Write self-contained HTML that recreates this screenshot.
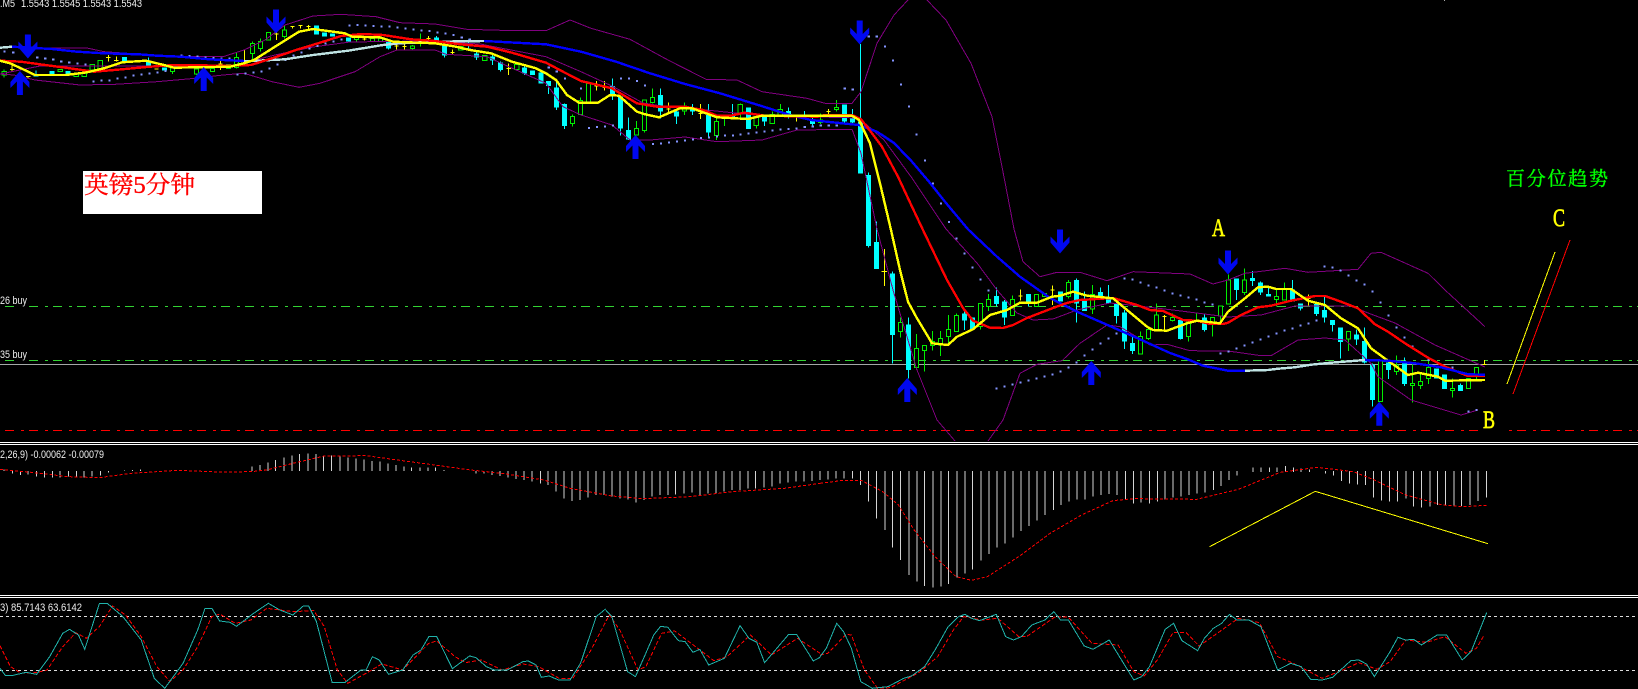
<!DOCTYPE html>
<html>
<head>
<meta charset="utf-8">
<style>
html,body{margin:0;padding:0;background:#000;overflow:hidden}
svg{display:block;position:absolute;left:0;top:0}
svg *{vector-effect:non-scaling-stroke}
.c{shape-rendering:crispEdges}
text{font-family:"Liberation Sans",sans-serif}
</style>
</head>
<body>
<svg width="1638" height="689" viewBox="0 0 1638 689" fill="none" stroke-linejoin="miter">
<rect x="0" y="0" width="1638" height="689" fill="#000"/>

<!-- horizontal levels -->
<g class="c">
<path d="M5 306.5H1638M5 360.5H1638" stroke="#32d232" stroke-dasharray="9 7 3 5"/>
<path d="M5 430.5H1638" stroke="#f00" stroke-dasharray="9 7 3 5"/>
<rect x="14" y="300" width="15" height="7" fill="#000"/>
<rect x="14" y="354" width="15" height="7" fill="#000"/>
<rect x="1478" y="428" width="30" height="4" fill="#000"/>
<path d="M0 364.5H1638" stroke="#a4a8a8"/>
<path d="M0 442.5H1638M0 444.5H1638M0 595.5H1638M0 597.5H1638" stroke="#fff"/>
<path d="M0 616.5H1638M0 670.5H1638" stroke="#ddd" stroke-dasharray="3 3"/>
</g>

<!-- candles: left -->
<g class="c" transform="translate(0,0) scale(.3482,.3333)">
<path stroke="#0ff" d="M104 212V230M426 172V200M1116 120V148M1254 108V130M1277 135V172M1346 118V152M1369 150V180M1415 160V195M1438 185V215M1507 200V225M1553 215V250"/>
<path stroke="#0ff" stroke-width="5" d="M104 225V230M150 213V225M196 213V225M357 171V185M426 186V197M472 203V212M909 76V104M932 97V110M955 101V110M1001 112V125M1116 125V146M1254 112V125M1277 137V167M1346 145V152M1369 160V172M1415 170V182M1438 187V210M1507 203V220M1530 212V225M1553 218V250"/>
<path stroke="#0e0" d="M12 208V232M495 200V222M564 205V225M679 158V205M725 125V180M748 115V155M817 75V115M1024 105V125M1070 110V125M1185 135V150M1208 100V140"/>
<path stroke="#0e0" fill="#000" d="M6 215h12V225h-12zM167 208h12V215h-12zM213 220h12V230h-12zM236 220h12V230h-12zM259 193h12V210h-12zM282 181h12V205h-12zM489 204h12V215h-12zM558 207h12V222h-12zM604 205h12V215h-12zM650 193h12V205h-12zM673 172h12V203h-12zM719 130h12V160h-12zM742 124h12V145h-12zM765 97h12V120h-12zM811 90h12V110h-12zM1018 110h12V118h-12zM1064 115h12V125h-12zM1087 115h12V125h-12zM1179 138h12V146h-12zM1202 122h12V130h-12zM1317 140h12V150h-12zM1386 167h12V182h-12zM1478 193h12V208h-12z"/>
<path stroke="#ff0" d="M35 190V215M29 208h12M81 228V235M75 230h12M311 165V185M305 173h12M334 170V185M328 182h12M397 183h12M443 207h12M633 182V210M627 192h12M702 150V195M696 190h12M794 85V120M788 102h12M840 80V85M834 80h12M863 76V85M857 76h12M886 75V90M880 80h12M972 100h12M1047 110V122M1041 117h12M1139 125V148M1133 138h12M1162 125V148M1156 140h12M1231 108V128M1225 115h12M1300 148V165M1294 157h12M1461 190V225M1455 205h12"/>
</g>

<!-- candles: mid -->
<g class="c" transform="translate(546,0) scale(.3482,.3333)">
<path stroke="#0ff" d="M7 243V282M30 243V330M53 310V387M191 235V300M214 290V407M237 353V420M329 265V355M375 330V372M421 312V345M467 312V410M536 312V355M627 343V378M696 322V355M742 333V358M765 348V382M857 313V368M880 327V375M903 132V520M926 517V690M949 665V690"/>
<path stroke="#0ff" stroke-width="5" d="M7 243V258M30 263V323M53 312V378M191 258V290M214 290V385M237 390V418M329 285V335M375 335V350M421 325V335M467 345V398M536 343V352M581 322V387M627 343V365M696 333V345M742 345V350M765 358V372M857 313V365M880 353V367M903 365V520M926 525V690"/>
<path stroke="#0e0" d="M76 343V380M99 292V345M260 363V405M283 300V398M306 265V310M398 307V345M490 350V420M513 343V378M558 310V352M604 345V385M650 335V372M673 312V350M788 340V372M834 300V335"/>
<path stroke="#0e0" fill="#000" d="M70 350h12V371h-12zM93 301h12V344h-12zM116 250h12V308h-12zM254 385h12V405h-12zM277 300h12V392h-12zM300 292h12V308h-12zM392 318h12V333h-12zM484 364h12V407h-12zM507 348h12V355h-12zM552 313h12V342h-12zM598 350h12V377h-12zM644 343h12V370h-12zM667 328h12V345h-12zM782 360h12V367h-12zM828 322h12V328h-12z"/>
<path stroke="#ff0" d="M145 243V272M139 258h12M168 243V272M162 262h12M352 308V340M346 327h12M444 312V357M438 340h12M719 345V365M713 348h12M811 327V348M805 335h12"/>
</g>

<!-- candles: after drop -->
<g class="c" transform="translate(820,230) scale(.3333)">
<path stroke="#0ff" d="M145 0V52M169 0V117M217 125V400M265 262V445M433 240V300M457 262V300M529 172V230M553 210V285M625 192V230M721 185V215M769 145V278M793 185V243M841 172V210M865 165V220M889 215V280M913 240V357M937 320V372M1081 262V328M1153 250V305"/>
<path stroke="#0ff" stroke-width="5" d="M145 0V48M169 36V117M217 130V315M265 283V420M433 250V272M457 262V297M529 198V222M553 214V263M625 192V218M721 185V215M769 150V220M793 213V243M841 186V203M865 205V220M889 222V258M913 248V335M937 339V363M1081 270V327M1153 262V300"/>
<path stroke="#0e0" d="M241 262V322M289 312V420M313 345V425M337 303V362M361 303V378M385 255V340M409 250V305M481 220V298M505 192V243M577 197V258M649 193V230M745 150V205M817 165V252M961 305V372M985 292V330M1009 220V300M1057 250V275M1105 270V335M1129 250V275M1177 262V320M1201 228V285M1225 133V222"/>
<path stroke="#0e0" fill="#000" d="M235 277h12V305h-12zM283 355h12V413h-12zM307 347h12V362h-12zM331 335h12V347h-12zM355 325h12V345h-12zM379 299h12V320h-12zM403 256h12V305h-12zM475 220h12V290h-12zM499 208h12V230h-12zM571 208h12V257h-12zM643 193h12V230h-12zM667 190h12V200h-12zM739 157h12V200h-12zM811 193h12V237h-12zM955 320h12V372h-12zM979 298h12V325h-12zM1003 255h12V300h-12zM1051 262h12V272h-12zM1099 276h12V320h-12zM1171 262h12V280h-12zM1195 228h12V258h-12zM1219 150h12V222h-12z"/>
<path stroke="#ff0" d="M193 57V168M185 124h16M601 178V212M595 198h12M697 167V225M691 180h12M1033 255V300M1027 260h12"/>
</g>

<!-- candles: right -->
<g class="c" transform="translate(1228,230) scale(.3333)">
<path stroke="#0ff" d="M25 145V210M73 123V168M97 155V195M121 170V200M193 150V215M217 220V242M265 222V258M289 195V278M313 270V305M337 292V385M385 298V345M409 292V400M433 400V530M481 397V447M529 382V468M697 460V483"/>
<path stroke="#0ff" stroke-width="5" d="M25 145V180M73 144V153M97 157V188M121 192V200M193 178V215M217 220V236M265 222V252M289 240V263M313 270V285M337 292V336M385 313V328M409 333V398M433 403V510M481 397V420M529 400V462M625 416V445M649 433V477M697 465V483"/>
<path stroke="#0e0" d="M49 115V195M145 180V230M169 157V212M361 305V363M505 377V435M553 400V518M577 430V477M601 390V462M673 445V503M745 412V450"/>
<path stroke="#0e0" fill="#000" d="M43 150h12V188h-12zM139 199h12V208h-12zM163 177h12V210h-12zM355 305h12V327h-12zM451 393h12V515h-12zM499 405h12V425h-12zM547 460h12V467h-12zM571 455h12V467h-12zM595 412h12V445h-12zM667 475h12V482h-12zM715 445h12V476h-12zM739 412h12V432h-12z"/>
<path stroke="#ff0" d="M241 193V228M235 205h12M235 228h12M769 390V404M763 403h12"/>
</g>

<!-- Bollinger -->
<g class="c" stroke="#800080">
<polyline points="38,48 87,48 104,51.7 153,55 181,56.7 223,56.7 244,50 265,40 285,25 313,16 341,14.3 376,16.7 400,22.7 435,24 467,29.3 515,30.7 546,30.7 570,20 591,28.3 630,39.3 668,60 706,79.3 737,80 762,91.7 807,98.3 825,103.3 852,103.3 861,91.7 877,43.3 894,15 908,0"/>
<polyline points="927,0 946,20 971,63.3 992,116.7 1002,166.7 1014,229 1023,261.7 1040,276.7 1057,272.3 1080,272.3 1107,280.7 1133,271.7 1190,274 1213,284 1228,280 1245,273.3 1285,268.3 1308,272.3 1358,269.3 1371,253.3 1381,252.3 1428,273.3 1445,290 1485,326.7"/>
<polyline points="0,74 40,66 120,66 230,66 275,55 313,47 350,42 420,41 480,44 546,56.7 581,71.7 612,86 643,103 668,107 706,110 755,115 807,116.7 859,118 884,140 911,176.7 946,229 977,263 997,290 1017,313 1033,320 1053,319 1077,310 1110,303 1130,305 1173,310 1228,317 1261,315 1295,306 1351,306 1368,313 1395,323 1435,345 1485,367"/>
<polyline points="0,74 14,75 35,80 80,85 115,84.3 157,81.7 195,78.3 223,75 244,73.3 272,81.7 299,87.3 320,83.3 355,71.7 380,56.7 397,50 435,50 446,54.3 487,56.7 505,65 546,83.3 563,106.7 581,115 612,125 630,140 650,140 685,137 717,141.7 762,140 797,130 852,129.3 861,153.3 877,229 893,290 917,370 937,420 955,441"/>
<polyline points="988,441 1003,420 1020,373.3 1037,364.3 1062,360.7 1080,343.3 1107,325 1120,326.7 1150,345 1167,344.3 1190,350.7 1228,351 1261,355.7 1271,355.7 1298,340 1325,338 1345,340 1371,363.3 1378,376.7 1411,400 1461,415 1478,410"/>
</g>

<!-- SAR dots -->
<g class="c" stroke="#8494ff" stroke-width="2">
<path transform="scale(.3482,.3333)" d="M10 155h6M35 157h6M104 172h6M127 175h6M150 178h6M173 184h6M196 187h6M219 190h6M242 194h6M265 244h6M288 241h6M311 241h6M334 235h6M357 232h6M380 226h6M403 223h6M426 220h6M449 217h6M472 213h6M518 166h6M541 168h6M564 170h6M587 172h6M610 174h6M633 176h6M656 176h6M679 223h6M702 220h6M725 217h6M748 214h6M771 205h6M794 193h6M817 180h6M840 166h6M863 157h6M886 145h6M909 138h6M932 130h6M955 125h6M978 118h6M1001 76h6M1024 75h6M1047 76h6M1070 78h6M1093 79h6M1116 80h6M1139 82h6M1162 85h6M1185 89h6M1208 91h6M1231 93h6M1254 97h6M1277 100h6M1300 105h6M1323 112h6M1346 118h6"/>
<path transform="translate(546,0) scale(.3482,.3333)" d="M5 203h6M28 214h6M51 235h6M97 265h6M120 384h6M143 381h6M166 379h6M189 376h6M212 236h6M235 236h6M258 243h6M281 256h6M304 432h6M327 430h6M350 427h6M373 424h6M396 421h6M419 418h6M442 414h6M465 412h6M488 409h6M511 406h6M534 406h6M556 403h6M579 400h6M602 397h6M625 394h6M648 391h6M671 388h6M694 387h6M717 385h6M740 381h6M763 379h6M786 376h6M809 376h6M832 376h6M855 265h6M878 268h6M924 110h6M947 109h6M970 139h6M993 181h6M1016 254h6M1039 319h6M1061 403h6M1085 481h6M1108 550h6M1131 610h6M1154 666h6"/>
<path transform="translate(820,230) scale(.3333)" d="M407 25h6M431 70h6M455 112h6M479 148h6M503 181h6M527 475h6M551 469h6M575 463h6M599 457h6M623 451h6M647 445h6M671 439h6M695 433h6M719 424h6M743 412h6M767 397h6M791 376h6M815 358h6M839 340h6M863 325h6M887 310h6M911 145h6M935 148h6M959 157h6M983 166h6M1007 172h6M1031 181h6M1055 190h6M1079 196h6M1103 202h6M1127 208h6M1151 217h6M1175 223h6M1199 370h6M1223 365h6"/>
<path transform="translate(1228,230) scale(.3333)" d="M23 355h6M47 346h6M71 337h6M95 328h6M119 319h6M143 310h6M167 301h6M191 295h6M215 286h6M239 280h6M263 271h6M287 109h6M311 112h6M335 121h6M359 136h6M383 151h6M407 163h6M431 184h6M455 217h6M479 256h6M503 292h6M527 322h6M551 349h6M599 390h6M671 412h6M719 544h6M743 540h6"/>
</g>

<!-- Moving averages -->
<g class="c" stroke-width="2.4">
<polyline stroke="#bfe3e3" points="0,47.7 12,46.7"/>
<polyline stroke="#0000ff" points="12,46.7 52,49 77,51.7 104,53.3 139,54.3 157,55.7 181,56.7 209,59.3 244,61"/>
<polyline stroke="#bfe3e3" points="244,61 251,61 285,59.3 313,55 348,50.7 383,45 400,43.3 435,41.7 484,41"/>
<polyline stroke="#0000ff" points="484,41 546,44.3 581,51.7 616,61.7 650,73.3 685,84 720,93.3 755,104 790,115 811,120 842,123.3 859,125 877,131.7 894,143 912,161.7 929,181.7 946,203 968,229.3 997,256.7 1020,276.7 1050,298 1077,311.7 1103,323 1137,338 1170,353 1187,359 1203,365.7 1228,370.7 1245,370.7"/>
<polyline stroke="#bfe3e3" points="1245,370.7 1268,370 1278,368.7 1295,367.3 1311,364.7 1331,362.7 1365,360"/>
<polyline stroke="#f00" points="0,60.7 21,61.7 45,65 70,68.3 94,71.7 122,69.3 150,66.7 174,65 226,65.7 251,65 275,57.3 296,50 320,42.7 341,36 362,34 383,35 411,39.3 435,41 460,44.3 487,46.7 512,52.7 546,62.7 563,71.7 581,81 612,88.3 623,95 637,103.3 657,106.7 685,106.7 703,110 717,115.7 731,115.7 744,112.7 765,115.7 818,116.7 825,115 852,115 861,119.3 870,130.7 882,146.7 898,176.7 912,206.7 923,230 947,280 963,308 973,320.7 990,327.7 1003,328 1013,325 1027,318 1053,308 1067,303 1080,300 1113,298 1137,305 1150,310 1163,311 1183,320 1197,320.7 1210,324 1223,324 1228,322.7 1241,315 1258,307.3 1271,305.7 1291,300.7 1315,296 1325,296 1341,301.7 1358,308.3 1375,324.3 1388,331.7 1405,343.3 1428,357.7 1445,366.7 1468,376 1485,376"/>
<polyline stroke="#ff0" points="0,60.7 10,63.3 21,68.3 35,75 66,75 87,72.3 104,68.3 122,62.3 146,60.7 164,65 174,67.7 230,66.7 244,63.3 254,60 275,46.7 299,31.7 313,29 345,33.3 352,36.7 380,37.3 393,41.7 435,43.3 456,46.7 470,50 491,53.3 512,61.7 536,68.3 546,73.3 556,80 567,95 579,102.7 598,102.7 610,95 619,95.7 637,111.7 645,114.3 659,117.3 680,108.3 692,108.3 717,117.3 748,119 762,115.7 825,115.7 852,115.7 859,120 870,143.3 880,183.3 891,230 900,270 908,301.7 917,318.3 932,343.3 948,345 957,336.7 973,329.3 990,315 1007,310 1020,302.7 1037,302.7 1052,296.7 1060,295.7 1073,291.7 1087,295.7 1113,298.3 1127,310 1147,326.7 1153,330 1167,330.7 1187,323.3 1197,320.7 1220,323.3 1228,311.7 1245,298.3 1258,287.3 1268,286.7 1276,289 1291,289 1308,300.7 1325,305 1341,318.3 1358,328.3 1371,348.3 1386,359.3 1408,375 1418,372.7 1438,376.7 1445,380.7 1485,380"/>
<polyline stroke="#0000ff" points="1365,360 1388,360.7 1415,363.3 1441,367.3 1468,374.3 1485,374.7"/>
</g>

<!-- trend lines -->
<g class="c">
<path stroke="#ff0" d="M1507 384L1555 252"/>
<path stroke="#f00" d="M1513 394L1570 240"/>
</g>

<!-- arrows -->
<g fill="#0008f0">
<path d="M0 0L9.5 11V17L3 10.5V24H-3V10.5L-9.5 17V11Z" transform="translate(19.9,71)"/>
<path d="M0 0L9.5 11V17L3 10.5V24H-3V10.5L-9.5 17V11Z" transform="translate(203.7,67)"/>
<path d="M0 0L9.5 11V17L3 10.5V24H-3V10.5L-9.5 17V11Z" transform="translate(635.5,135)"/>
<path d="M0 0L9.5 11V17L3 10.5V24H-3V10.5L-9.5 17V11Z" transform="translate(907.3,378)"/>
<path d="M0 0L9.5 11V17L3 10.5V24H-3V10.5L-9.5 17V11Z" transform="translate(1091.3,361)"/>
<path d="M0 0L9.5 11V17L3 10.5V24H-3V10.5L-9.5 17V11Z" transform="translate(1379.3,401.7)"/>
<path d="M0 0L-9.5 -11V-17L-3 -10.5V-24H3V-10.5L9.5 -17V-11Z" transform="translate(27.9,58.5)"/>
<path d="M0 0L-9.5 -11V-17L-3 -10.5V-24H3V-10.5L9.5 -17V-11Z" transform="translate(276,33.5)"/>
<path d="M0 0L-9.5 -11V-17L-3 -10.5V-24H3V-10.5L9.5 -17V-11Z" transform="translate(859.7,44.5)"/>
<path d="M0 0L-9.5 -11V-17L-3 -10.5V-24H3V-10.5L9.5 -17V-11Z" transform="translate(1060,253.5)"/>
<path d="M0 0L-9.5 -11V-17L-3 -10.5V-24H3V-10.5L9.5 -17V-11Z" transform="translate(1228,274.5)"/>
</g>

<!-- MACD histogram -->
<g class="c" stroke="#d4d4d4">
<path transform="translate(0,440) scale(.523,.3333)" d="M8 93V88M24 93V100M39 93V105M54 93V103M70 93V110M85 93V113M100 93V113M115 93V112M131 93V110M146 93V110M161 93V112M176 93V110M192 93V107M207 93V98M238 93V91M253 93V90M269 93V89M482 93V80M497 93V75M512 93V67M527 93V60M543 93V52M558 93V47M573 93V42M589 93V40M604 93V42M619 93V47M634 93V47M650 93V48M665 93V52M681 93V55M696 93V58M711 93V63M727 93V65M742 93V70M757 93V75M772 93V80M787 93V82M803 93V82M818 93V82M833 93V82M849 93V90M910 93V100M925 93V100M941 93V105M956 93V108M971 93V113M987 93V117M1002 93V120M1017 93V125M1033 93V130M1048 93V135M1063 93V155M1078 93V175M1094 93V183M1109 93V180M1124 93V172M1140 93V165M1155 93V165M1170 93V170M1185 93V175M1201 93V178M1216 93V188M1231 93V180M1247 93V170M1262 93V165M1277 93V165M1292 93V163M1308 93V160M1323 93V158M1338 93V165M1354 93V160M1369 93V160M1384 93V155M1400 93V150M1415 93V150M1430 93V145M1445 93V145M1461 93V142M1476 93V140M1491 93V130M1507 93V128M1522 93V125M1537 93V125M1553 93V123"/>
<path transform="translate(820,440) scale(.523,.3333)" d="M0 93V120M15 93V118M31 93V115M46 93V115M62 93V115M77 93V135M93 93V185M108 93V235M124 93V270M139 93V323M154 93V360M170 93V405M185 93V425M200 93V438M216 93V442M231 93V440M246 93V432M262 93V412M277 93V400M292 93V388M308 93V362M323 93V342M338 93V322M354 93V310M369 93V292M384 93V273M400 93V258M415 93V242M430 93V225M446 93V210M461 93V195M476 93V185M491 93V178M507 93V178M522 93V170M537 93V165M553 93V162M568 93V165M584 93V178M599 93V190M614 93V188M630 93V190M645 93V185M660 93V178M675 93V172M690 93V170M706 93V165M721 93V160M736 93V158M752 93V150M767 93V138M782 93V120M797 93V107M828 96V83M843 96V82M859 96V82M874 96V82M890 96V78M905 96V82M920 96V85M936 96V88M967 93V100M982 93V107M997 93V123M1012 93V130M1028 93V133M1043 93V135M1058 93V172M1074 93V182M1089 93V185M1104 93V185M1120 93V175M1135 93V200M1150 93V203M1166 93V200M1181 93V195M1196 93V195M1212 93V198M1227 93V198M1243 93V195M1258 93V183M1274 93V172"/>
</g>

<!-- MACD signal -->
<g class="c" stroke="#f00" stroke-dasharray="3 2">
<polyline transform="translate(0,440) scale(.523,.3333)" points="0,88 60,97 130,110 190,113 250,100 340,91 420,96 480,95 510,90 560,70 620,48 700,47 760,60 840,77 900,90 960,100 1040,120 1090,145 1170,168 1230,176 1320,170 1400,155 1500,145 1568,130"/>
<polyline transform="translate(820,440) scale(.523,.3333)" points="0,130 40,122 80,122 120,155 150,195 180,270 220,350 260,410 290,421 320,410 380,350 440,280 500,225 560,182 600,176 720,178 800,148 880,97 950,82 1020,95 1060,120 1120,165 1190,195 1230,200 1274,196"/>
</g>
<polyline class="c" stroke="#ff0" transform="translate(820,440) scale(.523,.3333)" points="745,320 947,154 1277,311"/>

<!-- Stochastic -->
<g class="c" stroke="#f00" stroke-dasharray="4 2">
<polyline transform="translate(0,440) scale(.523,.3333)" points="0,617 20,680 40,700 70,698 90,690 120,620 145,578 165,595 190,560 215,498 240,525 270,590 300,680 325,725 350,690 378,620 405,530 420,522 450,550 480,540 510,505 560,515 600,512 620,560 645,690 665,730 700,700 730,672 770,690 820,610 835,603 870,650 890,668 920,660 960,690 1000,672 1030,680 1070,716 1095,716 1130,630 1165,525 1185,570 1220,690 1235,680 1265,580 1290,573 1330,620 1365,662 1390,650 1435,585 1475,645 1525,595 1568,640"/>
<polyline transform="translate(820,440) scale(.523,.3333)" points="0,645 15,640 50,583 60,585 85,690 110,745 135,743 190,697 225,650 255,570 275,530 310,540 340,535 380,590 395,590 450,530 475,532 520,610 570,615 600,695 620,708 645,660 675,578 700,578 725,618 755,585 800,535 840,548 875,650 905,670 960,715 1000,690 1030,668 1065,688 1090,665 1120,600 1160,607 1195,590 1235,640 1255,625 1270,585"/>
</g>
<g class="c" stroke="#20b2aa">
<polyline transform="translate(0,440) scale(.523,.3333)" points="0,685 10,706 25,706 50,697 70,703 95,650 120,580 133,568 150,585 162,628 190,491 205,490 235,530 270,600 295,715 315,745 350,670 378,570 392,505 405,505 420,543 440,547 452,559 485,520 513,490 535,510 560,525 580,498 590,498 605,545 635,727 660,727 690,690 700,690 712,650 725,660 743,703 770,690 790,645 805,630 820,590 835,590 865,686 898,648 910,653 930,680 945,690 970,690 1000,665 1010,663 1025,675 1035,712 1050,708 1068,720 1090,720 1110,670 1140,530 1157,508 1170,530 1200,695 1215,710 1232,650 1250,585 1263,559 1277,562 1297,602 1310,605 1325,637 1338,628 1355,675 1385,655 1415,557 1432,595 1447,607 1462,668 1508,583 1523,583 1555,663 1568,652"/>
<polyline transform="translate(820,440) scale(.523,.3333)" points="0,650 12,625 32,550 45,575 60,625 78,725 100,745 130,740 160,715 175,708 200,680 220,630 245,560 265,530 277,523 290,535 305,542 337,523 355,590 370,600 385,590 405,555 430,540 447,515 460,540 475,540 505,618 522,628 553,600 600,720 615,710 630,680 660,568 676,550 692,602 722,632 735,595 752,565 768,550 783,523 797,540 820,540 843,560 875,690 900,670 920,680 938,718 960,720 980,712 1015,662 1030,660 1045,672 1060,710 1090,635 1105,592 1120,600 1135,598 1150,615 1180,585 1198,585 1228,660 1245,635 1275,517"/>
</g>

<!-- labels -->
<rect x="83" y="171" width="179" height="43" fill="#fff"/>
<text x="84" y="193" fill="#f00" stroke="#f00" stroke-width=".35" font-size="24" textLength="111" lengthAdjust="spacingAndGlyphs" style='font-family:"Liberation Serif","Noto Serif CJK SC",serif'>英镑5分钟</text>
<text x="1506" y="185" fill="#0f0" stroke="#0f0" stroke-width=".45" font-size="19" textLength="102" style='font-family:"Liberation Serif","Noto Serif CJK SC",serif'>百分位趋势</text>
<text transform="translate(1212,236) scale(.72,1)" fill="#ff0" stroke="#ff0" stroke-width=".6" font-size="25" style='font-family:"Liberation Serif",serif'>A</text>
<text transform="translate(1553,226) scale(.72,1)" fill="#ff0" stroke="#ff0" stroke-width=".6" font-size="25" style='font-family:"Liberation Serif",serif'>C</text>
<text transform="translate(1483,428) scale(.72,1)" fill="#ff0" stroke="#ff0" stroke-width=".6" font-size="25" style='font-family:"Liberation Serif",serif'>B</text>
<text x="0" y="7" fill="#eee" font-size="11" textLength="15" lengthAdjust="spacingAndGlyphs">.M5</text>
<text x="21" y="7" fill="#eee" font-size="11" textLength="121" lengthAdjust="spacingAndGlyphs">1.5543 1.5545 1.5543 1.5543</text>
<text x="0" y="304" fill="#eee" font-size="11" textLength="27" lengthAdjust="spacingAndGlyphs">26 buy</text>
<text x="0" y="358" fill="#eee" font-size="11" textLength="27" lengthAdjust="spacingAndGlyphs">35 buy</text>
<text x="0" y="458" fill="#eee" font-size="11" textLength="104" lengthAdjust="spacingAndGlyphs">2,26,9) -0.00062 -0.00079</text>
<text x="0" y="611" fill="#eee" font-size="11" textLength="82" lengthAdjust="spacingAndGlyphs">3) 85.7143 63.6142</text>
<rect x="1444" y="0" width="1" height="1" fill="#aaa"/>
</svg>
</body>
</html>
